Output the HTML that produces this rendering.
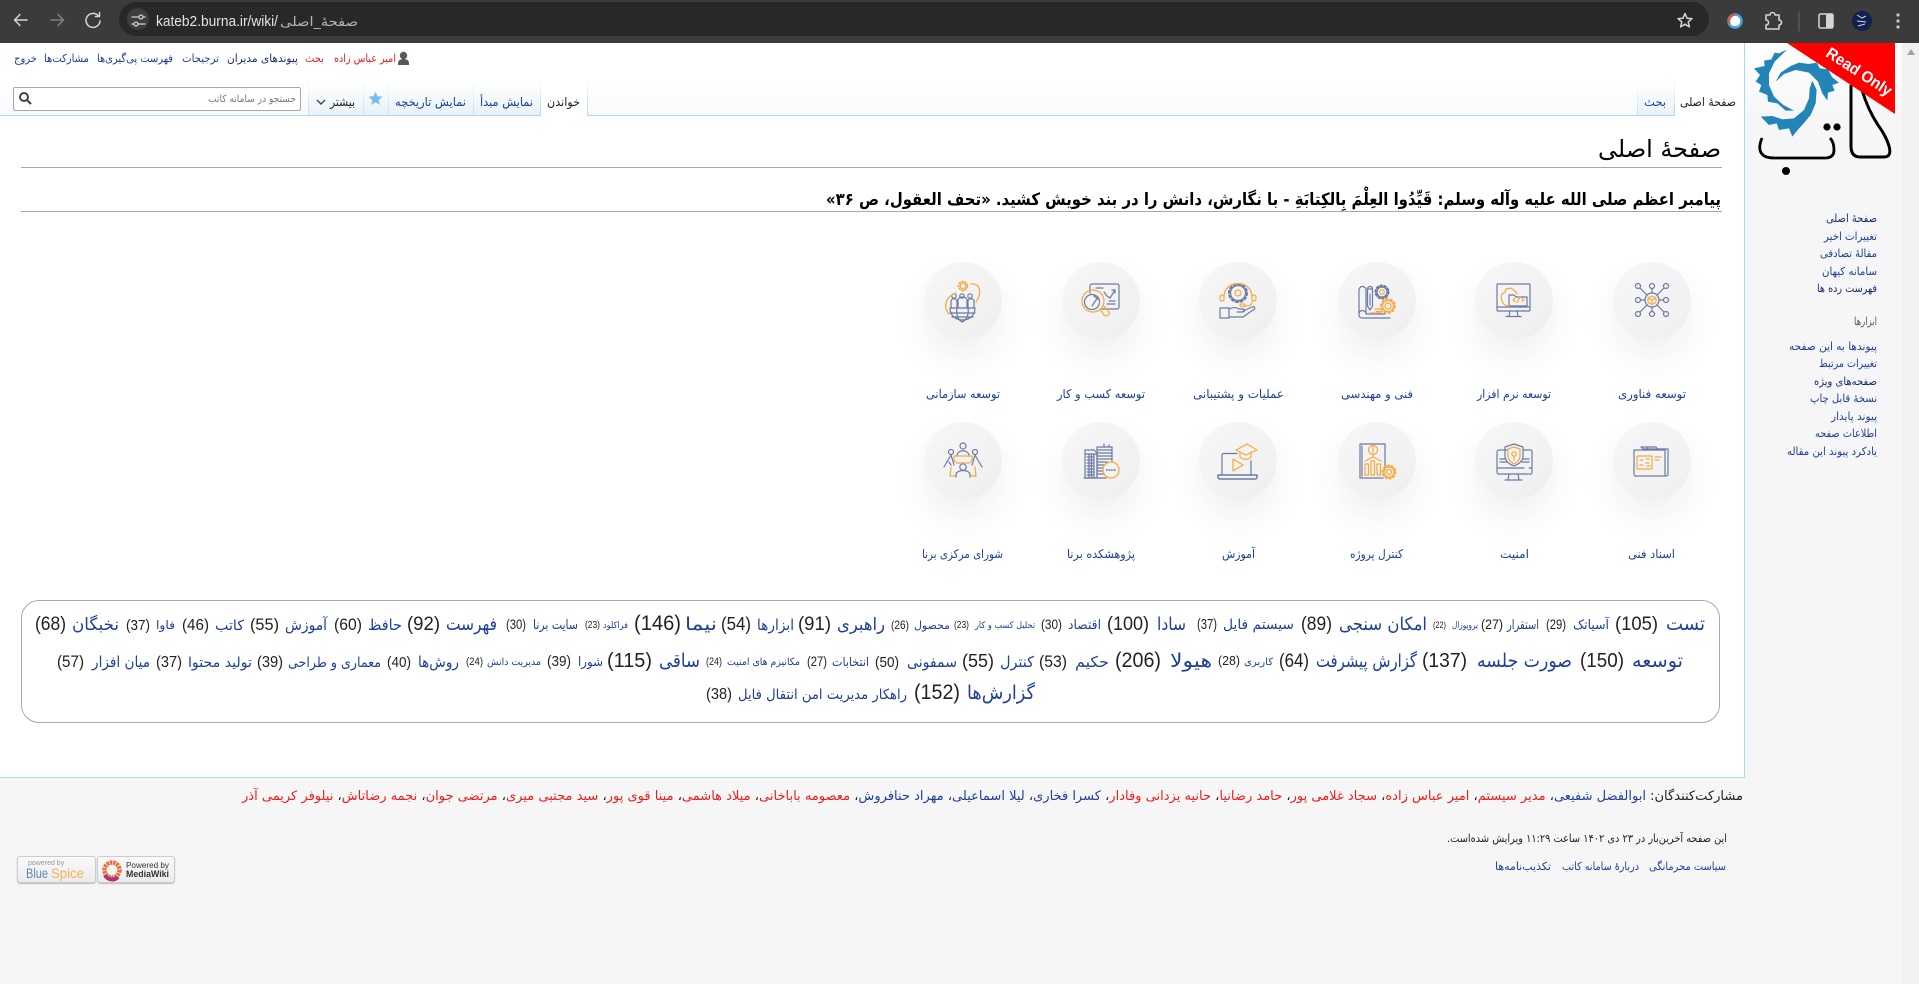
<!DOCTYPE html>
<html lang="fa"><head><meta charset="utf-8"><title>صفحهٔ اصلی - سامانه کاتب</title>
<style>
html,body{margin:0;padding:0;width:1919px;height:984px;overflow:hidden;background:#fff}
.abs{position:absolute}
#chrome{left:0;top:0;width:1919px;height:43px;background:#3b3b3b}
#addr{left:119px;top:2px;width:1590px;height:34px;border-radius:17px;background:#282828}
#tune{left:127px;top:8px;width:22px;height:22px;border-radius:50%;background:#3e3e3e}
#side{left:1744px;top:43px;width:158px;height:735px;background:#f6f6f6;border-left:1px solid #a7d7f9;box-sizing:border-box}
#logoarea{left:1745px;top:43px;width:157px;height:75px;background:linear-gradient(#fff,#f6f6f6)}
#sb{left:1902px;top:43px;width:17px;height:941px;background:#f1f1f1}
#foot{left:0;top:777px;width:1902px;height:207px;background:#f6f6f6}
#footline{left:0;top:777px;width:1745px;height:1px;background:#a7d7f9}
#tabline{left:0;top:115px;width:1744px;height:1px;background:#a7d7f9}
#tabbg{left:0;top:80px;width:1744px;height:35px;background:linear-gradient(#fff,#f8fafc)}
.tab{top:80px;height:35px;box-sizing:border-box;border-style:solid;border-width:0 1px;border-image:linear-gradient(#fff,#c4dff3) 1;background:linear-gradient(#fff 10%,#e8f2f8)}
.act{background:#fff;height:36px;border-image:linear-gradient(#fff,#a7d7f9) 1}
#search{left:13px;top:87px;width:288px;height:24px;border:1px solid #a2a9b1;border-radius:2px;background:#fff;box-sizing:border-box}
#h1l{left:21px;top:167px;width:1701px;height:1px;background:#a2a9b1}
#h2l{left:21px;top:211px;width:1701px;height:1px;background:#a2a9b1}
#cloud{left:21px;top:600px;width:1699px;height:123px;border:1px solid #aaa;border-radius:18px;box-sizing:border-box}
.c{width:78px;height:78px;border-radius:50%;background:linear-gradient(135deg,#f7f7f7,#efefef);box-shadow:0 18px 34px rgba(60,60,60,.07)}
.b{width:78px;height:27px;box-sizing:border-box;border:1px solid #ccc;border-radius:3px;background:linear-gradient(#fafafa,#ececec);box-shadow:0 1px 1px #bbb}
svg text{white-space:pre}
#tx{left:0;top:0}
.a{font-family:"DejaVu Sans",sans-serif;direction:rtl;unicode-bidi:plaintext}
.d{font-family:"Liberation Sans",sans-serif;fill:#222}
.lk{fill:#1d3f9a}.rd{fill:#f01c1c}.nv{fill:#1b2a70}.tx{fill:#222}
.i{fill:none;stroke:#6b7aa1;stroke-width:1.2;stroke-linecap:round;stroke-linejoin:round}
.o{fill:none;stroke:#f8a73c;stroke-width:1.2;stroke-linecap:round;stroke-linejoin:round}
</style></head><body>
<div class="abs" id="chrome"></div><div class="abs" id="addr"></div><div class="abs" id="tune"></div>
<div class="abs" id="tabbg"></div><div class="abs" id="tabline"></div>
<div class="abs tab" style="left:308px;width:56px"></div>
<div class="abs tab" style="left:363px;width:26px"></div>
<div class="abs tab" style="left:388px;width:86px"></div>
<div class="abs tab" style="left:473px;width:68px"></div>
<div class="abs tab act" style="left:540px;width:48px"></div>
<div class="abs tab" style="left:1637px;width:38px"></div>
<div class="abs tab act" style="left:1674px;width:71px"></div>
<div class="abs" id="search"></div>
<div class="abs" id="h1l"></div><div class="abs" id="h2l"></div>
<div class="abs" id="foot"></div><div class="abs" id="footline"></div>
<div class="abs" id="side"></div><div class="abs" id="logoarea"></div><div class="abs" id="sb"></div>
<div class="abs" id="cloud"></div>
<div class="abs c" style="left:1613px;top:262px"></div><div class="abs c" style="left:1475px;top:262px"></div><div class="abs c" style="left:1338px;top:262px"></div><div class="abs c" style="left:1199px;top:262px"></div><div class="abs c" style="left:1062px;top:262px"></div><div class="abs c" style="left:924px;top:262px"></div>
<div class="abs c" style="left:1613px;top:422px"></div><div class="abs c" style="left:1475px;top:422px"></div><div class="abs c" style="left:1338px;top:422px"></div><div class="abs c" style="left:1199px;top:422px"></div><div class="abs c" style="left:1062px;top:422px"></div><div class="abs c" style="left:924px;top:422px"></div>
<div class="abs b" style="left:17px;top:856px;width:79px"></div><div class="abs b" style="left:97px;top:856px"></div>

<svg class="abs" id="tx" width="1919" height="984" viewBox="0 0 1919 984" xmlns="http://www.w3.org/2000/svg">
<!-- browser chrome -->
<g fill="none" stroke="#d5d5d5" stroke-width="1.5" stroke-linecap="round" stroke-linejoin="round">
<path d="M27 20H15M20 14.5L14.5 20L20 25.5"/>
<path stroke="#808080" d="M51 20H63M58 14.5L63.5 20L58 25.5"/>
<path d="M98 15.5A7 7 0 1 0 100 21M99.5 12.5V16.5H95.5"/>
<path stroke-width="1.3" d="M132 17H139M132 24H134M143 17H145M138 24H145"/><circle cx="141" cy="17" r="2" stroke-width="1.2"/><circle cx="136" cy="24" r="2" stroke-width="1.2"/>
<path stroke-width="1.5" d="M1685 13.5l2 4.7 5 .4-3.8 3.3 1.2 5-4.4-2.7-4.4 2.7 1.2-5-3.8-3.3 5-.4z"/>
<path stroke-width="1.6" d="M1766 15h4a2.5 2.5 0 0 1 5 0h4v5a2.5 2.5 0 0 1 0 5v4h-13v-4a2.5 2.5 0 0 0 0-5z"/>
<path stroke="#666" stroke-width="1" d="M1799 12V31"/>
<rect x="1819" y="14" width="14" height="14" rx="1.5"/></g>
<rect x="1826" y="14" width="7" height="14" fill="#d5d5d5"/>
<circle cx="1735" cy="21" r="7" fill="#fff"/><circle cx="1735" cy="21" r="6.5" fill="none" stroke="#3fa6e6" stroke-width="2.5"/><path d="M1735 14.5a6.500 6.500 0 0 0-5.500 9" fill="none" stroke="#e2553f" stroke-width="2.5"/>
<circle cx="1862" cy="21" r="10" fill="#11204f"/><path d="M1857 15l5 3 4-2M1857 21l9 1M1858 26l7-2" stroke="#c9d2e8" fill="none"/>
<g fill="#c8c8c8"><circle cx="1898" cy="15" r="1.6"/><circle cx="1898" cy="21" r="1.6"/><circle cx="1898" cy="27" r="1.6"/></g>
<text x="156" y="26" font-family="Liberation Sans,sans-serif" font-size="14.5" fill="#e3e3e3" textLength="122" lengthAdjust="spacingAndGlyphs">kateb2.burna.ir/wiki/</text>
<text class="a" x="358" y="26" font-size="13" fill="#b5b5b5" textLength="78" lengthAdjust="spacingAndGlyphs">صفحهٔ_اصلی</text>

<!-- personal -->
<circle cx="403.5" cy="55.5" r="3.7" fill="#54595d"/><path d="M398 65v-2c0-3 3-4 5.500-4s5.500 1 5.500 4v2z" fill="#54595d"/>
<text class="a rd" x="396" y="62" font-size="11" textLength="62" lengthAdjust="spacingAndGlyphs">امیر عباس زاده</text>
<text class="a rd" x="324" y="62" font-size="11" textLength="19" lengthAdjust="spacingAndGlyphs">بحث</text>
<text class="a nv" x="298" y="62" font-size="11" textLength="71" lengthAdjust="spacingAndGlyphs">پیوندهای مدیران</text>
<text class="a lk" x="219" y="62" font-size="11" textLength="37" lengthAdjust="spacingAndGlyphs">ترجیحات</text>
<text class="a lk" x="173" y="62" font-size="11" textLength="76" lengthAdjust="spacingAndGlyphs">فهرست پی‌گیری‌ها</text>
<text class="a lk" x="89" y="62" font-size="11" textLength="45" lengthAdjust="spacingAndGlyphs">مشارکت‌ها</text>
<text class="a lk" x="37" y="62" font-size="11" textLength="23" lengthAdjust="spacingAndGlyphs">خروج</text>
<!-- tabs -->
<text class="a tx" x="580" y="106" font-size="12" textLength="33" lengthAdjust="spacingAndGlyphs">خواندن</text>
<text class="a lk" x="533" y="106" font-size="12" textLength="53" lengthAdjust="spacingAndGlyphs">نمایش مبدأ</text>
<text class="a lk" x="466" y="106" font-size="12" textLength="71" lengthAdjust="spacingAndGlyphs">نمایش تاریخچه</text>
<path d="M375.5 92l2 4.2 4.6 .6-3.400 3.200 .9 4.600-4.100-2.300-4.100 2.300 .9-4.600-3.400-3.200 4.600-.6z" fill="#79bdf0" stroke="#a5d3f5" stroke-width=".6"/>
<text class="a tx" x="355" y="106" font-size="12" textLength="25" lengthAdjust="spacingAndGlyphs">بیشتر</text>
<path d="M317 100l4 4 4-4" fill="none" stroke="#444" stroke-width="1.4"/>
<text class="a lk" x="1666" y="106" font-size="12" textLength="22" lengthAdjust="spacingAndGlyphs">بحث</text>
<text class="a tx" x="1736" y="106" font-size="12" textLength="56" lengthAdjust="spacingAndGlyphs">صفحهٔ اصلی</text>
<text class="a" x="296" y="102" font-size="10" fill="#777" textLength="88" lengthAdjust="spacingAndGlyphs">جستجو در سامانه کاتب</text>
<circle cx="24" cy="97" r="4" fill="none" stroke="#444" stroke-width="2"/><path d="M27 100l4 4" stroke="#444" stroke-width="2.2"/>
<!-- headings -->
<text class="a" x="1721" y="157" font-size="24" fill="#000" textLength="123" lengthAdjust="spacingAndGlyphs">صفحهٔ اصلی</text>
<text class="a" x="1721" y="205" font-size="17" font-weight="bold" fill="#000" textLength="895" lengthAdjust="spacingAndGlyphs">پیامبر اعظم صلی الله علیه وآله وسلم: قَیِّدُوا العِلْمَ بِالکِتابَةِ - با نگارش، دانش را در بند خویش کشید. «تحف العقول، ص ۳۶»</text>

<!-- logo -->
<g fill="#2384b8" transform="translate(1744,40) scale(.3333)">
<path d="M130 28L105 40L92 38L82 58L60 62L62 78L30 85L48 105L35 125L52 135L45 155L70 165L72 185L100 190L125 212L150 212L118 195L90 170L75 135L75 100L92 65Z"/>
<path d="M95 125L110 98L140 78L165 68L195 72L218 68L228 85L252 88L265 112L285 128L265 135L272 152L252 158L250 182L235 160L222 125L195 98L155 90L120 102Z"/>
<path d="M205 122L218 150L215 190L200 225L175 255L165 265L145 290L135 265L105 270L98 250L75 255L50 230L85 228L115 238L150 235L180 210L195 175L197 145Z"/>
</g>
<g fill="none" stroke="#000" stroke-width="3"><path d="M1851 85V146Q1851 157 1860 157H1884Q1892 157 1889 146Q1886 136 1878 125Q1868 110 1862 90"/>
<path stroke-width="2.8" d="M1762 138Q1757 150 1763 155Q1766 158 1775 158H1825Q1834 158 1834 150Q1834 142 1830 138"/></g>
<circle cx="1827" cy="127" r="3.6"/><circle cx="1837" cy="127" r="3.6"/><circle cx="1786" cy="171" r="4"/>
<path d="M1787 43H1895V114Z" fill="#f00"/>
<text x="1859" y="77" transform="rotate(33 1859 72)" text-anchor="middle" font-family="Liberation Sans,sans-serif" font-size="16" font-weight="bold" fill="#fff" textLength="75" lengthAdjust="spacingAndGlyphs">Read Only</text>
<path d="M1907 55l4-6 4 6z" fill="#a3a3a3"/>

<!-- sidebar -->
<g font-size="11">
<text class="a nv" x="1877" y="222" textLength="51" lengthAdjust="spacingAndGlyphs">صفحهٔ اصلی</text>
<text class="a lk" x="1877" y="240" textLength="53" lengthAdjust="spacingAndGlyphs">تغییرات اخیر</text>
<text class="a lk" x="1877" y="257" textLength="57" lengthAdjust="spacingAndGlyphs">مقالهٔ تصادفی</text>
<text class="a lk" x="1877" y="275" textLength="55" lengthAdjust="spacingAndGlyphs">سامانه کیهان</text>
<text class="a nv" x="1877" y="292" textLength="60" lengthAdjust="spacingAndGlyphs">فهرست رده ها</text>
<text class="a" fill="#555" x="1877" y="325" textLength="23" lengthAdjust="spacingAndGlyphs">ابزارها</text>
<text class="a lk" x="1877" y="350" textLength="88" lengthAdjust="spacingAndGlyphs">پیوندها به این صفحه</text>
<text class="a lk" x="1877" y="367" textLength="58" lengthAdjust="spacingAndGlyphs">تغییرات مرتبط</text>
<text class="a nv" x="1877" y="385" textLength="63" lengthAdjust="spacingAndGlyphs">صفحه‌های ویژه</text>
<text class="a lk" x="1877" y="402" textLength="67" lengthAdjust="spacingAndGlyphs">نسخهٔ قابل چاپ</text>
<text class="a lk" x="1877" y="420" textLength="46" lengthAdjust="spacingAndGlyphs">پیوند پایدار</text>
<text class="a lk" x="1877" y="437" textLength="62" lengthAdjust="spacingAndGlyphs">اطلاعات صفحه</text>
<text class="a lk" x="1877" y="455" textLength="90" lengthAdjust="spacingAndGlyphs">یادکرد پیوند این مقاله</text>
</g>

<!-- labels -->
<g font-size="12">
<text class="a lk" x="1686" y="398" textLength="68" lengthAdjust="spacingAndGlyphs">توسعه فناوری</text>
<text class="a lk" x="1551" y="398" textLength="74" lengthAdjust="spacingAndGlyphs">توسعه نرم افزار</text>
<text class="a lk" x="1413" y="398" textLength="72" lengthAdjust="spacingAndGlyphs">فنی و مهندسی</text>
<text class="a lk" x="1284" y="398" textLength="91" lengthAdjust="spacingAndGlyphs">عملیات و پشتیبانی</text>
<text class="a lk" x="1145" y="398" textLength="88" lengthAdjust="spacingAndGlyphs">توسعه کسب و کار</text>
<text class="a lk" x="1000" y="398" textLength="74" lengthAdjust="spacingAndGlyphs">توسعه سازمانی</text>
<text class="a lk" x="1675" y="558" textLength="47" lengthAdjust="spacingAndGlyphs">اسناد فنی</text>
<text class="a lk" x="1529" y="558" textLength="29" lengthAdjust="spacingAndGlyphs">امنیت</text>
<text class="a lk" x="1403" y="558" textLength="53" lengthAdjust="spacingAndGlyphs">کنترل پروژه</text>
<text class="a lk" x="1255" y="558" textLength="33" lengthAdjust="spacingAndGlyphs">آموزش</text>
<text class="a lk" x="1135" y="558" textLength="68" lengthAdjust="spacingAndGlyphs">پژوهشکده برنا</text>
<text class="a lk" x="1003" y="558" textLength="81" lengthAdjust="spacingAndGlyphs">شورای مرکزی برنا</text>
</g>

<!-- icons row 1 -->
<g transform="translate(1652,300)"><g class="i"><circle r="7"/><path d="M-12-12L-5-5M12-12L5-5M-12 12L-5 5M12 12L5 5M0-11.5V-7M0 11.5V7M-11.5 0H-7M11.5 0H7"/><circle cx="-14" cy="-14" r="2.5"/><circle cy="-14" r="2.5"/><circle cx="14" cy="-14" r="2.5"/><circle cx="-14" r="2.5"/><circle cx="14" r="2.5"/><circle cx="-14" cy="14" r="2.5"/><circle cy="14" r="2.5"/><circle cx="14" cy="14" r="2.5"/></g><path class="o" d="M-4-2L0-4L4-2V2.5L0 4.500L-4 2.5ZM-4-2L0 0L4-2M0 0V4.5"/></g>
<g transform="translate(1514,300)"><g class="i"><rect x="-17" y="-16" width="33" height="27" rx="1"/><path d="M-17 7H16M-4 11L-5 16M3 11L4 16M-8 16.5H7"/><path d="M-5-5H0L2-3H13V6H-5Z"/></g><g class="o"><path d="M-5 6C-12 6-14-2-12-6L-9-8L-8-11L-3-12L1-9L3-6"/><path d="M1 1.5L-1 0L1-2M8 1.5L10 0L8-2M3 2.5L6-3"/></g></g>
<g transform="translate(1377,300)"><g class="i"><path d="M-11 14V-10A3.5 3.5 0 0 0-18-10V15A3 3 0 0 0-15 18H13M-18 14A3.5 3.5 0 0 1-11 14H8"/><path d="M-9.5-11H-4.5V6L-7 10L-9.5 6ZM-9.5-11A2.5 2.5 0 0 1-4.5-11M-7-6V5"/><circle cx="5" cy="-8" r="5"/><circle cx="5" cy="-8" r="6.5" stroke-dasharray="1.8 2.3" stroke-width="2"/></g><g class="o"><circle cx="11" cy="6" r="3"/><circle cx="11" cy="6" r="5.5"/><circle cx="11" cy="6" r="7" stroke-dasharray="1.8 2.6" stroke-width="1.8"/><path d="M-2 9H6M-7 13H4M-1 11.5H5"/><circle cx="5" cy="-8" r="2.3"/></g></g>
<g transform="translate(1238,300)"><g class="i"><circle cy="-7" r="7.5"/><circle cy="-7" r="9" stroke-dasharray="2.2 2.5" stroke-width="2"/><path d="M-18 8H-9V18H-18ZM-9 9C-5 7-2 7 1 9H5C7 9 7 12 4 12H-1M5 11L14 7C17 6 18 9 15 10L5 17H-9"/></g><g class="o"><circle cy="-7" r="3"/><path d="M-14-3C-14-21 14-21 14-3M14 2C14 5 11 6 7 6"/><rect x="-18" y="-5" width="4" height="6" rx="2"/><rect x="14" y="-5" width="4" height="6" rx="2"/><rect x="2" y="4" width="5" height="2.5" rx="1.2"/></g></g>
<g transform="translate(1101,300)"><g class="i"><path d="M-11-7V-14A2 2 0 0 1-9-16H16A2 2 0 0 1 18-14V7A2 2 0 0 1 16 9H1"/><path d="M-5-12H2M6 4H14M8 1H14M-7-4L-3-1M3-8L6-4L9-2L14-10M11-10H14V-7M-9 6L-3-3"/><circle cx="-9" cy="2" r="7.5"/></g><g class="o"><circle cx="-8" cy="1" r="11"/><path d="M-1 9L3 15A3 3 0 0 0 8 12L3 6"/></g></g>
<g transform="translate(963,300)"><g class="i"><path d="M-13 8C-13 24 12 24 12 8ZM-13 13H12M-6 8C-7 14-5 20-1 22M5 8C6 14 4 20-1 22M-11 17H10"/><path d="M-12 8V1C-12-2-6-2-6 1V8M-5 8V0C-5-4 4-4 4 0V8M5 8V1C5-2 11-2 11 1V8"/><circle cx="-9" cy="-4" r="2.2"/><circle cx="-1" cy="-4" r="2.2"/><circle cx="7" cy="-4" r="2.2"/></g><g class="o"><circle cy="-14" r="2.8"/><circle cy="-14" r="4.5" stroke-dasharray="1.5 1.8" stroke-width="1.5"/><path d="M-7-7C-16-4-21 6-14 14M8-16C18-17 19-7 13 2"/></g></g>

<!-- icons row 2 -->
<g transform="translate(1652,461)"><g class="i"><path d="M16 10V-12H-9L-11-14H-5M13-12H16M-17 15H14A2 2 0 0 0 16 13V10M-18-11H13V15H-16A2 2 0 0 1-18 13Z"/><path d="M-6-11L-4-14H4L6-11"/></g><g class="o"><rect x="-15" y="-5" width="15" height="13" rx="1"/><path d="M-12-1H-9M-12 4H-9M-6-2H-3M-6 2H-3M-5 5H-2M3-4H9M3-1H7"/></g></g>
<g transform="translate(1514,461)"><g class="i"><path d="M-7-11H-15A2 2 0 0 0-17-9V11A2 2 0 0 0-15 13H14M9-11H15A2 2 0 0 1 18-9V11A2 2 0 0 1 15 13M-17 7H10M15 7H18M-5 13L-6 19M4 13L5 19M-9 19H8M-14-2H-8M-14 1H-7M9-2H15M8 1H15"/><path d="M0-17L9-14V-5C9 0 5 3 0 5C-5 3-9 0-9-5V-14Z"/></g><g class="o"><path d="M0-14L6-12V-5C6-1 3 1 0 3C-3 1-6-1-6-5V-12Z"/><circle cy="-7" r="2.2"/><path d="M0-5V-1"/></g></g>
<g transform="translate(1377,461)"><g class="i"><path d="M-17-17H8V9M-17-17V17H6M-15-15V15"/></g><g class="o"><circle cx="-4" cy="-11" r="4.5"/><path d="M-4-14V-8M-12 0L-4-4L4 0M-4-6V-4"/><rect x="-12" y="3" width="3.5" height="11"/><rect x="-6" y="0" width="3.5" height="14"/><rect x="0" y="3" width="3.5" height="11"/><circle cx="12" cy="11" r="2.5"/><circle cx="12" cy="11" r="5"/><circle cx="12" cy="11" r="6.5" stroke-dasharray="1.8 2.3" stroke-width="1.8"/></g></g>
<g transform="translate(1238,461)"><g class="i"><path d="M-16 14V-6A1.5 1.5 0 0 1-14.5-7.5H-1M13 0V14"/><path d="M-20 14H19V16A2 2 0 0 1 17 18H-18A2 2 0 0 1-20 16Z" stroke-width="1.5"/></g><g class="o"><path d="M-5-2V10L5 4Z"/><path d="M-2-11L9-17L19-11L8-6ZM2-9V-4C5-1 11-1 13-4V-9"/></g></g>
<g transform="translate(1101,461)"><g class="i"><path d="M-16 17V-11H-7L-4-8V17ZM-16-7H-4M-14-4H-7M-14-1H-7M-14 2H-7M-14 5H-7M-14 8H-7M-14 11H-7M-14 14H-7M-12-7V17M-9.5-7V17M-7-7V17"/><path d="M-4-14H11V0M-4-14V17M-4-11H11M-4-8H11M-4-5H11M-4-2H11M-4 1H6M-4 4H4M-4 7H3M-4 10H4M-4 13H6M-17 17H5M3-14V-17M8-14V-16"/></g><circle cx="10" cy="9" r="8" fill="#f3f3f3" stroke="#f8a73c" stroke-width="1.3"/><path d="M5 9H15" stroke="#6b7aa1" stroke-width="1.8" stroke-dasharray="1 .6"/></g>
<g transform="translate(963,461)"><g class="i"><circle cy="-15" r="3"/><path d="M-6-5C-6-12 6-12 6-5"/><circle cx="-12" cy="-9" r="2.5"/><circle cx="12" cy="-9" r="2.5"/><path d="M-12-6L-19 6M-12-6L-9 4M-14 1L-12 4M12-6L19 6M12-6L9 4"/><circle cy="6" r="3.2"/><path d="M-7 16V14C-7 8 7 8 7 14V16"/></g><g class="o"><path d="M-9-5H9C10-1 8 1 6 2H-6C-8 1-10-1-9-5ZM-12 6L-13 15H-8M12 6L13 15H8"/></g></g>

<!-- tag cloud -->
<g class="cl">
<text class="a lk" x="1705" y="630" font-size="19" textLength="39" lengthAdjust="spacingAndGlyphs">تست</text>
<text class="d" x="1615" y="630" font-size="19" textLength="43" lengthAdjust="spacingAndGlyphs">(105)</text>
<text class="a lk" x="1609" y="629" font-size="13" textLength="36" lengthAdjust="spacingAndGlyphs">آسیاتک</text><text class="d" x="1546" y="629" font-size="14" textLength="20" lengthAdjust="spacingAndGlyphs">(29)</text>
<text class="a lk" x="1539" y="629" font-size="13" textLength="32" lengthAdjust="spacingAndGlyphs">استقرار</text><text class="d" x="1481" y="629" font-size="14" textLength="22" lengthAdjust="spacingAndGlyphs">(27)</text>
<text class="a lk" x="1478" y="628" font-size="9" textLength="26" lengthAdjust="spacingAndGlyphs">پروپوزال</text><text class="d" x="1433" y="628" font-size="9" textLength="13" lengthAdjust="spacingAndGlyphs">(22)</text>
<text class="a lk" x="1427" y="630" font-size="18" textLength="88" lengthAdjust="spacingAndGlyphs">امکان سنجی</text><text class="d" x="1301" y="630" font-size="19" textLength="31" lengthAdjust="spacingAndGlyphs">(89)</text>
<text class="a lk" x="1294" y="629" font-size="14" textLength="71" lengthAdjust="spacingAndGlyphs">سیستم فایل</text><text class="d" x="1197" y="629" font-size="15" textLength="20" lengthAdjust="spacingAndGlyphs">(37)</text>
<text class="a lk" x="1186" y="630" font-size="18" textLength="29" lengthAdjust="spacingAndGlyphs">سادا</text><text class="d" x="1107" y="630" font-size="19" textLength="42" lengthAdjust="spacingAndGlyphs">(100)</text>
<text class="a lk" x="1101" y="629" font-size="13" textLength="33" lengthAdjust="spacingAndGlyphs">اقتصاد</text><text class="d" x="1041" y="629" font-size="14" textLength="21" lengthAdjust="spacingAndGlyphs">(30)</text>
<text class="a lk" x="1035" y="628" font-size="9" textLength="60" lengthAdjust="spacingAndGlyphs">تحلیل کسب و کار</text><text class="d" x="954" y="628" font-size="10" textLength="15" lengthAdjust="spacingAndGlyphs">(23)</text>
<text class="a lk" x="950" y="629" font-size="11" textLength="36" lengthAdjust="spacingAndGlyphs">محصول</text><text class="d" x="891" y="629" font-size="12" textLength="18" lengthAdjust="spacingAndGlyphs">(26)</text>
<text class="a lk" x="885" y="630" font-size="17" textLength="48" lengthAdjust="spacingAndGlyphs">راهبری</text><text class="d" x="798" y="630" font-size="19" textLength="33" lengthAdjust="spacingAndGlyphs">(91)</text>
<text class="a lk" x="794" y="630" font-size="15" textLength="37" lengthAdjust="spacingAndGlyphs">ابزارها</text><text class="d" x="721" y="630" font-size="18" textLength="30" lengthAdjust="spacingAndGlyphs">(54)</text>
<text class="a lk" x="717" y="630" font-size="18" textLength="32" lengthAdjust="spacingAndGlyphs">نیما</text><text class="d" x="634" y="630" font-size="21" textLength="47" lengthAdjust="spacingAndGlyphs">(146)</text>
<text class="a lk" x="628" y="628" font-size="9" textLength="25" lengthAdjust="spacingAndGlyphs">فراکلود</text><text class="d" x="585" y="628" font-size="10" textLength="15" lengthAdjust="spacingAndGlyphs">(23)</text>
<text class="a lk" x="578" y="629" font-size="13" textLength="45" lengthAdjust="spacingAndGlyphs">سایت برنا</text><text class="d" x="506" y="629" font-size="14" textLength="20" lengthAdjust="spacingAndGlyphs">(30)</text>
<text class="a lk" x="497" y="630" font-size="18" textLength="51" lengthAdjust="spacingAndGlyphs">فهرست</text><text class="d" x="407" y="630" font-size="19" textLength="33" lengthAdjust="spacingAndGlyphs">(92)</text>
<text class="a lk" x="402" y="630" font-size="15" textLength="34" lengthAdjust="spacingAndGlyphs">حافظ</text><text class="d" x="334" y="630" font-size="17" textLength="28" lengthAdjust="spacingAndGlyphs">(60)</text>
<text class="a lk" x="327" y="630" font-size="15" textLength="42" lengthAdjust="spacingAndGlyphs">آموزش</text><text class="d" x="250" y="630" font-size="17" textLength="29" lengthAdjust="spacingAndGlyphs">(55)</text>
<text class="a lk" x="244" y="630" font-size="14" textLength="29" lengthAdjust="spacingAndGlyphs">کاتب</text><text class="d" x="182" y="630" font-size="16" textLength="27" lengthAdjust="spacingAndGlyphs">(46)</text>
<text class="a lk" x="175" y="629" font-size="12" textLength="19" lengthAdjust="spacingAndGlyphs">فاوا</text><text class="d" x="126" y="630" font-size="15" textLength="24" lengthAdjust="spacingAndGlyphs">(37)</text>
<text class="a lk" x="119" y="630" font-size="17" textLength="47" lengthAdjust="spacingAndGlyphs">نخبگان</text><text class="d" x="35" y="630" font-size="19" textLength="31" lengthAdjust="spacingAndGlyphs">(68)</text>

<text class="a lk" x="1683" y="667" font-size="19" textLength="51" lengthAdjust="spacingAndGlyphs">توسعه</text><text class="d" x="1580" y="667" font-size="20" textLength="44" lengthAdjust="spacingAndGlyphs">(150)</text>
<text class="a lk" x="1572" y="667" font-size="19" textLength="95" lengthAdjust="spacingAndGlyphs">صورت جلسه</text><text class="d" x="1422" y="667" font-size="20" textLength="45" lengthAdjust="spacingAndGlyphs">(137)</text>
<text class="a lk" x="1417" y="667" font-size="18" textLength="101" lengthAdjust="spacingAndGlyphs">گزارش پیشرفت</text><text class="d" x="1279" y="667" font-size="19" textLength="30" lengthAdjust="spacingAndGlyphs">(64)</text>
<text class="a lk" x="1273" y="665" font-size="10" textLength="29" lengthAdjust="spacingAndGlyphs">کاربری</text><text class="d" x="1218" y="665" font-size="13" textLength="22" lengthAdjust="spacingAndGlyphs">(28)</text>
<text class="a lk" x="1212" y="667" font-size="19" textLength="42" lengthAdjust="spacingAndGlyphs">هیولا</text><text class="d" x="1115" y="667" font-size="21" textLength="46" lengthAdjust="spacingAndGlyphs">(206)</text>
<text class="a lk" x="1109" y="667" font-size="15" textLength="34" lengthAdjust="spacingAndGlyphs">حکیم</text><text class="d" x="1039" y="667" font-size="17" textLength="28" lengthAdjust="spacingAndGlyphs">(53)</text>
<text class="a lk" x="1034" y="667" font-size="15" textLength="34" lengthAdjust="spacingAndGlyphs">کنترل</text><text class="d" x="962" y="667" font-size="18" textLength="32" lengthAdjust="spacingAndGlyphs">(55)</text>
<text class="a lk" x="957" y="667" font-size="15" textLength="50" lengthAdjust="spacingAndGlyphs">سمفونی</text><text class="d" x="875" y="667" font-size="15" textLength="24" lengthAdjust="spacingAndGlyphs">(50)</text>
<text class="a lk" x="869" y="666" font-size="12" textLength="37" lengthAdjust="spacingAndGlyphs">انتخابات</text><text class="d" x="807" y="666" font-size="14" textLength="20" lengthAdjust="spacingAndGlyphs">(27)</text>
<text class="a lk" x="800" y="665" font-size="10" textLength="73" lengthAdjust="spacingAndGlyphs">مکانیزم های امنیت</text><text class="d" x="706" y="665" font-size="11" textLength="16" lengthAdjust="spacingAndGlyphs">(24)</text>
<text class="a lk" x="700" y="667" font-size="19" textLength="41" lengthAdjust="spacingAndGlyphs">ساقی</text><text class="d" x="607" y="667" font-size="20" textLength="45" lengthAdjust="spacingAndGlyphs">(115)</text>
<text class="a lk" x="603" y="666" font-size="13" textLength="25" lengthAdjust="spacingAndGlyphs">شورا</text><text class="d" x="547" y="666" font-size="15" textLength="24" lengthAdjust="spacingAndGlyphs">(39)</text>
<text class="a lk" x="541" y="665" font-size="10" textLength="54" lengthAdjust="spacingAndGlyphs">مدیریت دانش</text><text class="d" x="466" y="665" font-size="11" textLength="17" lengthAdjust="spacingAndGlyphs">(24)</text>
<text class="a lk" x="459" y="667" font-size="15" textLength="41" lengthAdjust="spacingAndGlyphs">روش‌ها</text><text class="d" x="387" y="667" font-size="15" textLength="24" lengthAdjust="spacingAndGlyphs">(40)</text>
<text class="a lk" x="381" y="667" font-size="14" textLength="93" lengthAdjust="spacingAndGlyphs">معماری و طراحی</text><text class="d" x="257" y="667" font-size="16" textLength="26" lengthAdjust="spacingAndGlyphs">(39)</text>
<text class="a lk" x="252" y="667" font-size="14" textLength="64" lengthAdjust="spacingAndGlyphs">تولید محتوا</text><text class="d" x="156" y="667" font-size="16" textLength="26" lengthAdjust="spacingAndGlyphs">(37)</text>
<text class="a lk" x="150" y="667" font-size="15" textLength="58" lengthAdjust="spacingAndGlyphs">میان افزار</text><text class="d" x="57" y="667" font-size="17" textLength="27" lengthAdjust="spacingAndGlyphs">(57)</text>

<text class="a lk" x="1035" y="699" font-size="19" textLength="68" lengthAdjust="spacingAndGlyphs">گزارش‌ها</text><text class="d" x="914" y="699" font-size="21" textLength="46" lengthAdjust="spacingAndGlyphs">(152)</text>
<text class="a lk" x="907" y="699" font-size="14" textLength="169" lengthAdjust="spacingAndGlyphs">راهکار مدیریت امن انتقال فایل</text><text class="d" x="706" y="699" font-size="16" textLength="26" lengthAdjust="spacingAndGlyphs">(38)</text>
</g>

<!-- footer -->
<text class="a" x="1743" y="800" font-size="13" fill="#222" textLength="1501" lengthAdjust="spacingAndGlyphs">مشارکت‌کنندگان: <tspan class="lk">ابوالفضل شفیعی</tspan>، <tspan class="rd">مدیر سیستم</tspan>، <tspan class="rd">امیر عباس زاده</tspan>، <tspan class="rd">سجاد غلامی پور</tspan>، <tspan class="rd">حامد رضانیا</tspan>، <tspan class="rd">حانیه یزدانی وفادار</tspan>، <tspan class="lk">کسرا فخاری</tspan>، <tspan class="lk">لیلا اسماعیلی</tspan>، <tspan class="lk">مهراد حنافروش</tspan>، <tspan class="rd">معصومه باباخانی</tspan>، <tspan class="rd">میلاد هاشمی</tspan>، <tspan class="rd">مینا قوی پور</tspan>، <tspan class="rd">سید مجتبی میری</tspan>، <tspan class="rd">مرتضی جوان</tspan>، <tspan class="rd">نجمه رضاتاش</tspan>، <tspan class="rd">نیلوفر کریمی آذر</tspan></text>
<text class="a tx" x="1727" y="842" font-size="11" textLength="280" lengthAdjust="spacingAndGlyphs">این صفحه آخرین‌بار در ۲۳ دی ۱۴۰۲ ساعت ۱۱:۲۹ ویرایش شده‌است.</text>
<text class="a lk" x="1726" y="870" font-size="11" textLength="77" lengthAdjust="spacingAndGlyphs">سیاست محرمانگی</text>
<text class="a lk" x="1639" y="870" font-size="11" textLength="77" lengthAdjust="spacingAndGlyphs">دربارهٔ سامانه کاتب</text>
<text class="a lk" x="1551" y="870" font-size="11" textLength="56" lengthAdjust="spacingAndGlyphs">تکذیب‌نامه‌ها</text>

<!-- badges -->
<text x="28" y="865" font-family="Liberation Sans,sans-serif" font-size="7" fill="#999">powered by</text>
<text x="26" y="878" font-family="Liberation Sans,sans-serif" font-size="14" fill="#5f86b8" textLength="22" lengthAdjust="spacingAndGlyphs">Blue</text>
<text x="51" y="878" font-family="Liberation Sans,sans-serif" font-size="14" fill="#f7b25a" textLength="33" lengthAdjust="spacingAndGlyphs">Spice</text>
<circle cx="112" cy="870" r="7.5" fill="none" stroke="#e8703a" stroke-width="4.500" stroke-dasharray="2.500 .8"/>
<path d="M105 875a8 8 0 0 0 13 2" fill="none" stroke="#a8366f" stroke-width="4"/>
<text x="126" y="868" font-family="Liberation Sans,sans-serif" font-size="8" fill="#333" textLength="43" lengthAdjust="spacingAndGlyphs">Powered by</text>
<text x="126" y="877" font-family="Liberation Sans,sans-serif" font-size="9" font-weight="bold" fill="#333" textLength="43" lengthAdjust="spacingAndGlyphs">MediaWiki</text>
</svg>
</body></html>
